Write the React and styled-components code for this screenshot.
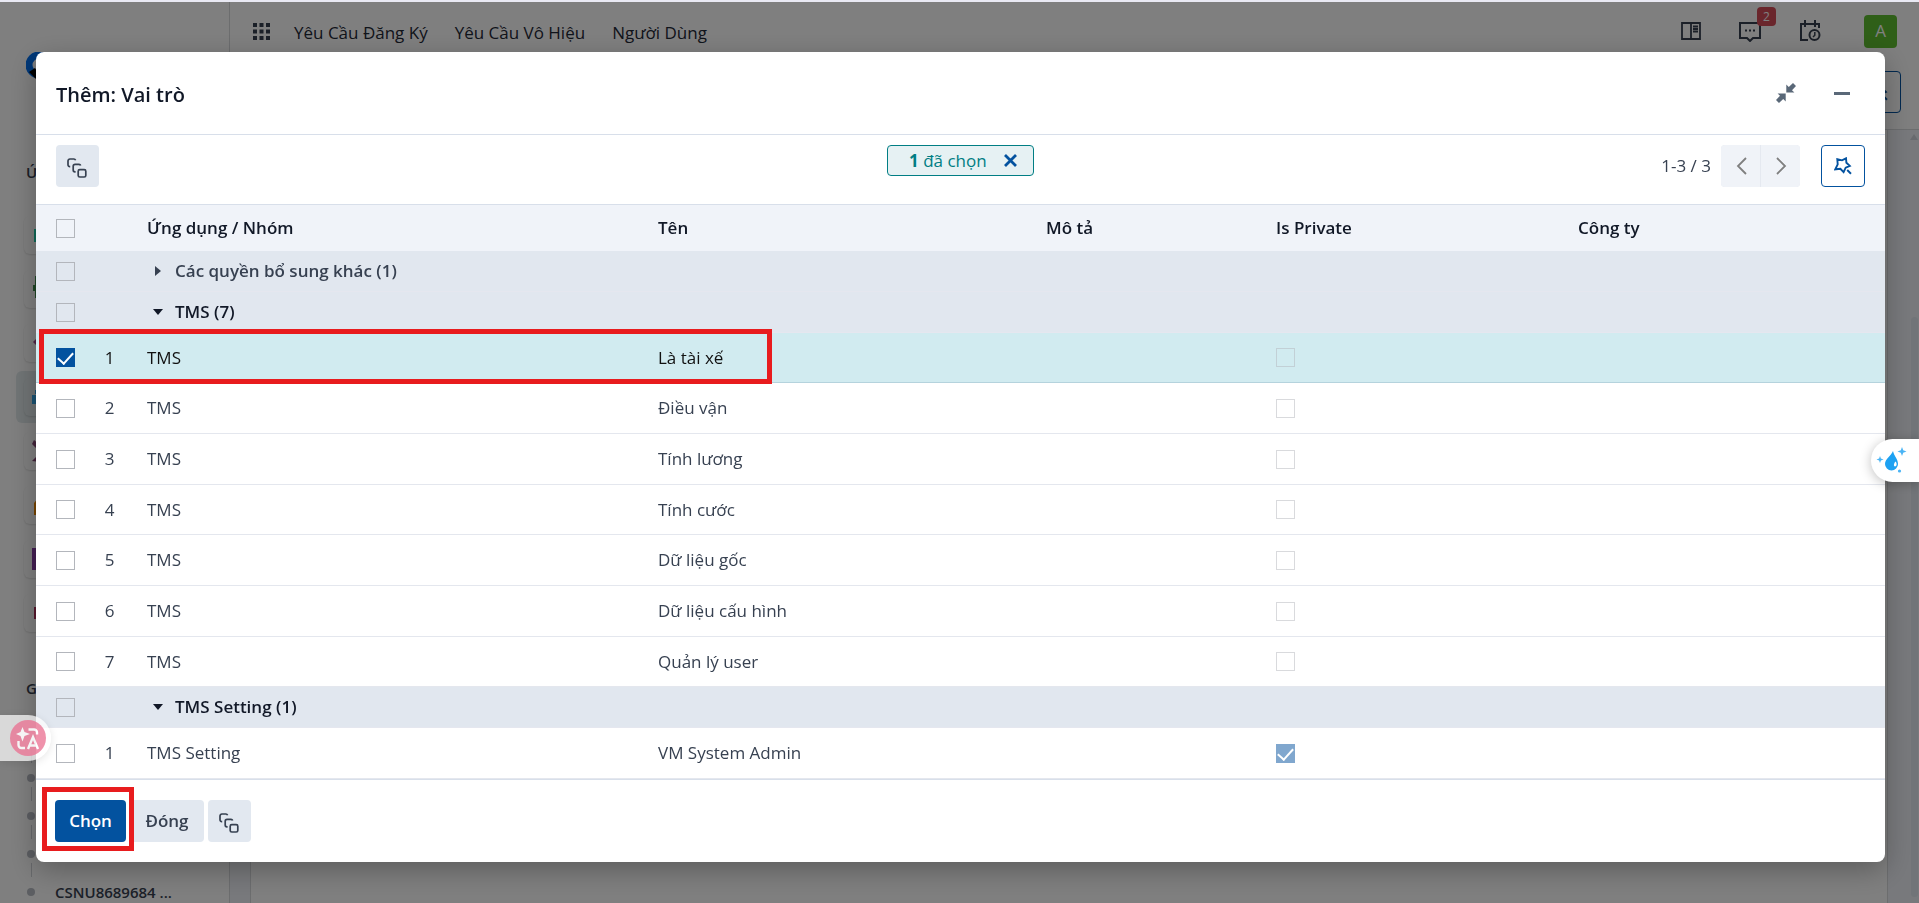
import React from "react";
import styled, { createGlobalStyle } from "styled-components";

const groups = [
  { name: "Các quyền bổ sung khác", count: 1, open: false, rows: [] },
  {
    name: "TMS",
    count: 7,
    open: true,
    rows: [
      { app: "TMS", name: "Là tài xế", selected: true },
      { app: "TMS", name: "Điều vận" },
      { app: "TMS", name: "Tính lương" },
      { app: "TMS", name: "Tính cước" },
      { app: "TMS", name: "Dữ liệu gốc" },
      { app: "TMS", name: "Dữ liệu cấu hình" },
      { app: "TMS", name: "Quản lý user" },
    ],
  },
  {
    name: "TMS Setting",
    count: 1,
    open: true,
    rows: [{ app: "TMS Setting", name: "VM System Admin", isPrivate: true }],
  },
];

const sideApps = [
  { id: "discuss", color: "#1fd3b0", d: "M2 8h24v13H2z" },
  { id: "calendar", color: "#3f8f4d", d: "M3 1h6v6h10V1h4v22H3v-7H1v-6h2z" },
  { id: "contacts", color: "#a0488c", d: "M1 13l7-7 8 7-8 7z" },
  { id: "employees", color: "#35a8e8", active: true, d: "M0 12h14v9H0zM3 7h4v4H3z" },
  { id: "tools", color: "#8a4a78", d: "M2 3l6 5-3 4-5-5zM0 24l8-8 5 3-5 6z" },
  { id: "stock", color: "#f28a00", d: "M2 24V12l6-7h14v19z" },
  { id: "sales", color: "#8a3ea8", d: "M0 3h24v22H0z" },
  { id: "apps", color: "#b0305a", d: "M2 8h18v12H2z" },
];

const StackIcon = () => (
  <svg width="20" height="20" viewBox="0 0 20 20" fill="none" stroke="#374151" strokeWidth="1.7">
    <path d="M3.2 8.6H2.9A1.9 1.9 0 0 1 1 6.7V2.9A1.9 1.9 0 0 1 2.9 1H6.9A1.9 1.9 0 0 1 8.6 2.2" />
    <path d="M8.6 13.9H8A1.9 1.9 0 0 1 6.2 12V8.2A1.9 1.9 0 0 1 8.100 6.300H12A1.9 1.9 0 0 1 13.700 7.500" />
    <rect x="11.2" y="11.600" width="7.600" height="7.400" rx="1.600" />
  </svg>
);

const StarIcon = () => (
  <svg width="18" height="18" viewBox="0 0 18 18" fill="none" stroke="#03529f" strokeWidth="1.900">
    <path d="M3.300 2.200L8 3.300L12 1.300L12.400 5.800L15.800 8.900L11.700 10.700L9.600 15.200L6.400 11.800L1.300 12.300L3.700 7.300Z" />
    <path d="M13.200 13l3.800 3.700" />
  </svg>
);

const App = () => {
  return (
    <Page>
      <GlobalStyle />
      <Shell>
        <Sidebar>
          <Logo>
            <svg width="48" height="48" viewBox="0 0 48 48">
              <circle cx="13" cy="13" r="10" fill="none" stroke="#0070f0" strokeWidth="7" />
              <path d="M3 20l6-4 8 12H11z" fill="#000" />
            </svg>
          </Logo>
          <SideTitle>Ứng dụng</SideTitle>
          <SideApps>
            {sideApps.map((app) => (
              <SideApp key={app.id} href="#" $active={app.active} aria-label={app.id}>
                <SideTile>
                  <svg width="28" height="28" viewBox="0 0 28 28">
                    <path d={app.d} fill={app.color} />
                  </svg>
                </SideTile>
              </SideApp>
            ))}
          </SideApps>
          <SideTitle>Gần đây</SideTitle>
          <Timeline>
            <TimelineItem />
            <TimelineItem />
            <TimelineItem />
            <TimelineItem>CSNU8689684 ...</TimelineItem>
          </Timeline>
        </Sidebar>
        <Main>
          <Topbar>
            <svg width="17" height="17" viewBox="0 0 17 17" fill="#374151">
              {[0, 6.5, 13].map((y) =>
                [0, 6.5, 13].map((x) => (
                  <rect key={`${x}-${y}`} x={x} y={y} width="4" height="4" />
                ))
              )}
            </svg>
            <TopMenu>
              <TopLink href="#">Yêu Cầu Đăng Ký</TopLink>
              <TopLink href="#">Yêu Cầu Vô Hiệu</TopLink>
              <TopLink href="#">Người Dùng</TopLink>
            </TopMenu>
            <Systray>
              <TrayButton aria-label="Tài liệu">
                <svg width="20" height="20" viewBox="0 0 20 20" fill="none" stroke="#374151" strokeWidth="2">
                  <path d="M1 2h18v16H1zM10 2v16M12 5.500h5M12 8h5M12 10.500h5" strokeWidth="1.800" />
                </svg>
              </TrayButton>
              <TrayButton aria-label="Tin nhắn">
                <svg width="22" height="22" viewBox="0 0 22 22" fill="none" stroke="#374151" strokeWidth="2">
                  <path d="M1 3h20v15h-7l-3 3-3-3H1z" />
                  <path d="M6 10.500h2M10 10.500h2M14 10.500h2" />
                </svg>
                <Badge>2</Badge>
              </TrayButton>
              <TrayButton aria-label="Hoạt động">
                <svg width="22" height="22" viewBox="0 0 22 22" fill="none" stroke="#374151" strokeWidth="2">
                  <path d="M9 20H2V4h18v4M6 0v7M16 0v7" />
                  <circle cx="15.500" cy="15" r="5" />
                  <path d="M15.800 12v3.300l-1.800 1.700" strokeWidth="1.500" />
                </svg>
              </TrayButton>
              <Avatar aria-label="Tài khoản">A</Avatar>
            </Systray>
          </Topbar>
          <ControlBar>
            <SearchToggle aria-label="Tìm kiếm">
              <StarIcon />
            </SearchToggle>
          </ControlBar>
          <Canvas>
            <Sheet />
            <ScrollTrack>
              <ScrollArrow />
              <ScrollThumb />
            </ScrollTrack>
          </Canvas>
        </Main>
      </Shell>

      <Backdrop>
        <Dialog role="dialog" aria-label="Thêm: Vai trò">
          <DialogHeader>
            <Title>Thêm: Vai trò</Title>
            <HeaderActions>
              <PlainButton aria-label="Thu nhỏ">
                <svg width="20" height="20" viewBox="0 0 20 20" fill="#5a6878">
                  <path d="M10.300 9.500V1.500L12.800 4L17 0L20 3L16 7.200L18.400 9.500Z" />
                  <path d="M9.700 10.500V18.500L7.200 16L3 20L0 17L4 12.800L1.600 10.500Z" />
                </svg>
              </PlainButton>
              <PlainButton aria-label="Ẩn">
                <svg width="16" height="20" viewBox="0 0 16 20" fill="#5a6878">
                  <rect y="9" width="16" height="3" />
                </svg>
              </PlainButton>
            </HeaderActions>
          </DialogHeader>

          <Toolbar>
            <IconButton aria-label="Mở rộng nhóm">
              <StackIcon />
            </IconButton>
            <Chip>
              <span>
                <b>1</b> đã chọn
              </span>
              <PlainButton aria-label="Bỏ chọn">
                <svg width="13" height="13" viewBox="0 0 13 13" stroke="#03529f" strokeWidth="2.800">
                  <path d="M1 1l11 11M12 1L1 12" />
                </svg>
              </PlainButton>
            </Chip>
            <PagerArea>
              <span>1-3 / 3</span>
              <Pager>
                <PagerButton aria-label="Trước">
                  <svg width="12" height="18" viewBox="0 0 12 18" fill="none" stroke="#7f7f7f" strokeWidth="1.800">
                    <path d="M11 1L3 9l8 8" />
                  </svg>
                </PagerButton>
                <PagerButton aria-label="Sau">
                  <svg width="12" height="18" viewBox="0 0 12 18" fill="none" stroke="#7f7f7f" strokeWidth="1.800">
                    <path d="M2 1l8 8-8 8" />
                  </svg>
                </PagerButton>
              </Pager>
              <SearchToggle aria-label="Bộ lọc">
                <StarIcon />
              </SearchToggle>
            </PagerArea>
          </Toolbar>

          <Table>
            <colgroup>
              <Col $w={50} />
              <Col $w={45} />
              <Col $w={511} />
              <Col $w={388} />
              <Col $w={230} />
              <Col $w={302} />
              <col />
            </colgroup>
            <thead>
              <HeadRow>
                <CheckCell>
                  <Checkbox aria-label="Chọn tất cả" />
                </CheckCell>
                <th />
                <HeadCell>Ứng dụng / Nhóm</HeadCell>
                <HeadCell>Tên</HeadCell>
                <HeadCell>Mô tả</HeadCell>
                <HeadCell>Is Private</HeadCell>
                <HeadCell>Công ty</HeadCell>
              </HeadRow>
            </thead>
            {groups.map((group) => (
              <tbody key={group.name}>
                <GroupRow>
                  <CheckCell>
                    <Checkbox aria-label={group.name} />
                  </CheckCell>
                  <td />
                  <Cell colSpan={5}>
                    <GroupToggle $open={group.open} aria-expanded={group.open}>
                      <Caret $open={group.open} />
                      {group.name} ({group.count})
                    </GroupToggle>
                  </Cell>
                </GroupRow>
                {group.rows.map((row, i) => (
                  <Row key={row.name} $selected={row.selected}>
                    <CheckCell>
                      <Checkbox defaultChecked={row.selected} aria-label={row.name} />
                    </CheckCell>
                    <NumberCell>{i + 1}</NumberCell>
                    <Cell>{row.app}</Cell>
                    <Cell>{row.name}</Cell>
                    <Cell />
                    <Cell>
                      <Checkbox disabled defaultChecked={row.isPrivate} aria-label="Is Private" />
                    </Cell>
                    <Cell />
                  </Row>
                ))}
              </tbody>
            ))}
          </Table>
          <RowMark />

          <DialogFooter>
            <Marked>
              <PrimaryButton>Chọn</PrimaryButton>
              <ButtonMark />
            </Marked>
            <SecondaryButton>Đóng</SecondaryButton>
            <IconButton aria-label="Mở rộng nhóm">
              <StackIcon />
            </IconButton>
          </DialogFooter>
        </Dialog>
      </Backdrop>

      <TranslateTab aria-label="Dịch">
        <svg width="36" height="36" viewBox="0 0 36 36" opacity=".75">
          <circle cx="18" cy="18" r="18" fill="#ea6e90" />
          <path d="M12.500 7l2 5 5.500 2-5.500 2-2 5.500-2-5.500L6 14l4.500-2z" fill="#fff" />
          <path d="M18.500 9.500H24a3 3 0 0 1 3 3v2M8.500 21v4a3 3 0 0 0 3 3H15" fill="none" stroke="#fff" strokeWidth="2.400" />
          <path d="M18 29l5-12 5 12M20 25.500h6" fill="none" stroke="#fff" strokeWidth="2.400" />
        </svg>
      </TranslateTab>
      <DropTab aria-label="Trợ lý">
        <svg width="32" height="28" viewBox="0 0 32 28" fill="#1da1f2">
          <path d="M17 4c1 5 5 8 5 13a6.500 6.500 0 0 1-13 0c0-5 6-8 8-13z" />
          <path d="M19.500 14.500c2 2 1 5-.5 5s-1.500-3 .5-5z" fill="#fff" />
          <path d="M26 0l1.200 3.300L30.500 4.500 27.200 5.700 26 9 24.800 5.700 21.500 4.500 24.800 3.300z" opacity=".8" />
          <path d="M4 9l.9 2.600L7.500 12.500 4.900 13.400 4 16 3.100 13.400.500 12.500 3.100 11.600z" opacity=".8" />
          <circle cx="23.500" cy="24" r="1.600" opacity=".8" />
        </svg>
      </DropTab>
    </Page>
  );
};

const GlobalStyle = createGlobalStyle`
  * {
    box-sizing: border-box;
  }
  body {
    margin: 0;
    overflow: hidden;
    font-family: "Open Sans", "Noto Sans", sans-serif;
    font-size: 17px;
    line-height: 24px;
    color: #374151;
  }
  button {
    font: inherit;
    color: inherit;
    border: 0;
    padding: 0;
    background: none;
    cursor: pointer;
  }
  svg {
    display: block;
  }
`;

const Page = styled.div`
  height: 100vh;
  border-top: 2px solid #e9e9f3;
  overflow: hidden;
`;

const Shell = styled.div`
  display: flex;
  height: 100%;
  background: #fff;
`;

const Sidebar = styled.aside`
  flex: none;
  width: 230px;
  border-right: 1px solid #d8dadd;
  padding: 50px 0 0 16px;
`;
const Logo = styled.div`
  height: 80px;
  margin-left: 10px;
`;
const SideTitle = styled.div`
  margin-left: 10px;
  height: 77px;
  padding-top: 28px;
  font-size: 15px;
  font-weight: 600;
`;
const SideApps = styled.nav`
  display: flex;
  flex-direction: column;
  gap: 2px;
  margin-bottom: 9px;
`;
const SideApp = styled.a`
  display: flex;
  align-items: center;
  height: 52px;
  padding-left: 8px;
  border-radius: 6px;
  background: ${(props) => (props.$active ? "#e2eaec" : "transparent")};
`;
const SideTile = styled.span`
  width: 40px;
  padding: 5px 4px 5px 8px;
  border-radius: 6px;
  box-shadow: 0 1px 2px rgba(0, 0, 0, 0.12);
`;
const Timeline = styled.ul`
  list-style: none;
  margin: 0;
  padding: 34px 0 0 11px;
`;
const TimelineItem = styled.li`
  position: relative;
  height: 38px;
  padding: 7px 0 0 28px;
  font-size: 15px;
  font-weight: 600;
  &::before {
    content: "";
    position: absolute;
    left: 0;
    top: 15px;
    width: 8px;
    height: 8px;
    border-radius: 50%;
    background: #b8bcc4;
  }
  &::after {
    content: "";
    position: absolute;
    left: 4px;
    top: -10px;
    width: 1px;
    height: 14px;
    background: #d0d3d8;
  }
`;

const Main = styled.div`
  flex: 1;
  display: flex;
  flex-direction: column;
`;
const Topbar = styled.header`
  display: flex;
  align-items: center;
  height: 58px;
  padding: 0 22px 0 23px;
`;
const TopMenu = styled.nav`
  display: flex;
  gap: 27px;
  margin-left: 24px;
  padding-top: 4px;
`;
const TopLink = styled.a`
  color: #1f2937;
  text-decoration: none;
`;
const Systray = styled.div`
  display: flex;
  align-items: center;
  gap: 38px;
  margin-left: auto;
`;
const TrayButton = styled.button`
  position: relative;
`;
const Badge = styled.span`
  position: absolute;
  left: 18px;
  top: -13px;
  width: 19px;
  height: 19px;
  border-radius: 4px;
  background: #d44c59;
  color: #fff;
  font-size: 12px;
  line-height: 19px;
`;
const Avatar = styled.button`
  width: 33px;
  height: 33px;
  margin-left: 5px;
  border-radius: 4px;
  background: #5fbe30;
  color: #fff;
`;
const ControlBar = styled.div`
  display: flex;
  justify-content: flex-end;
  height: 70px;
  padding: 11px 18px;
  border-bottom: 1px solid #d8dadd;
`;
const Canvas = styled.div`
  flex: 1;
  display: flex;
  background: #f1f3f8;
  padding-left: 20px;
`;
const Sheet = styled.div`
  flex: 1;
  background: #fff;
  border: solid #d8dadd;
  border-width: 0 1px;
`;
const ScrollTrack = styled.div`
  display: flex;
  flex-direction: column;
  justify-content: space-between;
  align-items: flex-end;
  width: 31px;
  padding: 4px 1px 6px 0;
`;
const ScrollArrow = styled.span`
  border: 4px solid transparent;
  border-top-width: 0;
  border-bottom: 6px solid #d0d5dd;
`;
const ScrollThumb = styled.span`
  width: 7px;
  height: 76%;
  border-radius: 4px;
  background: #e2e8f0;
`;

const Backdrop = styled.div`
  position: fixed;
  inset: 2px 0 0;
  padding: 50px 34px 0 36px;
  background: rgba(0, 0, 0, 0.5);
`;
const Dialog = styled.section`
  position: relative;
  border-radius: 8px;
  background: #fff;
  box-shadow: 0 8px 28px rgba(0, 0, 0, 0.28);
`;
const DialogHeader = styled.header`
  display: flex;
  align-items: center;
  justify-content: space-between;
  height: 83px;
  padding: 0 35px 0 20px;
  border-bottom: 1px solid #d8dfea;
`;
const Title = styled.h1`
  margin: 0;
  padding-top: 4px;
  font-size: 20px;
  line-height: 28px;
  font-weight: 600;
  color: #111827;
`;
const HeaderActions = styled.div`
  display: flex;
  gap: 38px;
`;
const PlainButton = styled.button`
  display: flex;
`;

const Toolbar = styled.div`
  display: grid;
  grid-template-columns: 1fr auto 1fr;
  align-items: start;
  height: 70px;
  padding: 10px 20px 0;
  border-bottom: 1px solid #d8dfea;
`;
const Button = styled.button`
  display: flex;
  align-items: center;
  justify-content: center;
  height: 42px;
  border-radius: 4px;
`;
const IconButton = styled(Button)`
  width: 43px;
  padding: 3px 1px 0 0;
  background: #e2e8f0;
`;
const PrimaryButton = styled(Button)`
  width: 71px;
  background: #03529f;
  color: #fff;
  font-weight: 600;
`;
const SecondaryButton = styled(Button)`
  width: 74px;
  background: #e2e8f0;
  font-weight: 600;
`;
const SearchToggle = styled(Button)`
  width: 44px;
  border: 1px solid #03529f;
`;
const Chip = styled.div`
  display: flex;
  align-items: center;
  justify-content: space-between;
  width: 147px;
  height: 31px;
  padding: 0 16px 0 21px;
  border: 1px solid #017e84;
  border-radius: 4px;
  background: #e6f1f3;
  color: #017e84;
  b {
    font-weight: 700;
  }
`;
const PagerArea = styled.div`
  display: flex;
  align-items: center;
  justify-content: flex-end;
`;
const Pager = styled.div`
  display: flex;
  gap: 1px;
  margin: 0 21px 0 10px;
  border-radius: 4px;
  background: #e5e9f0;
  overflow: hidden;
`;
const PagerButton = styled(Button)`
  width: 39px;
  border-radius: 0;
  background: #f0f3f8;
`;

const Table = styled.table`
  width: 100%;
  table-layout: fixed;
  border-collapse: separate;
  border-spacing: 0;
  td,
  th {
    padding: 0;
    text-align: left;
    vertical-align: middle;
  }
`;
const Col = styled.col`
  width: ${(props) => props.$w}px;
`;
const HeadRow = styled.tr`
  height: 46px;
  background: #f0f3f9;
`;
const Cell = styled.td`
  && {
    padding-left: 16px;
  }
`;
const HeadCell = styled.th`
  && {
    padding-left: 16px;
  }
  color: #111827;
  font-weight: 600;
`;
const CheckCell = styled.td`
  && {
    padding-left: 20px;
  }
`;
const NumberCell = styled.td`
  && {
    padding-left: 2px;
    text-align: center;
  }
`;
const GroupRow = styled.tr`
  height: 41px;
  background: #e1e7ef;
  td {
    border-bottom: 1px solid #e5e7ef;
  }
`;
const Row = styled.tr`
  height: ${(props) => (props.$selected ? 50 : 51)}px;
  background: ${(props) => (props.$selected ? "#d1ebf0" : "#fff")};
  color: ${(props) => (props.$selected ? "#111" : "#374151")};
  &:nth-child(3n + 5) {
    height: 50px;
  }
  td {
    border-bottom: 1px solid ${(props) => (props.$selected ? "#b5d3dd" : "#e4e7ee")};
  }
`;
const Checkbox = styled.input.attrs({ type: "checkbox" })`
  appearance: none;
  display: block;
  width: 19px;
  height: 19px;
  margin: 0;
  border: 1px solid #b3b6bc;
  opacity: ${(props) => (props.disabled ? 0.5 : 1)};
  &:checked {
    border-color: #03529f;
    background: #03529f;
  }
  &:checked::after {
    content: "";
    display: block;
    width: 7px;
    height: 13px;
    margin: 0 auto;
    border: solid #fff;
    border-width: 0 2px 2px 0;
    transform: rotate(42deg);
  }
`;
const GroupToggle = styled.button`
  display: flex;
  align-items: center;
  padding-left: 6px;
  font-weight: 600;
  color: ${(props) => (props.$open ? "#111827" : "#374151")};
`;
const Caret = styled.span`
  flex: none;
  width: 10px;
  height: 10px;
  margin-right: 12px;
  background: currentColor;
  clip-path: ${(props) =>
    props.$open ? "polygon(0 20%, 100% 20%, 50% 80%)" : "polygon(20% 0, 80% 50%, 20% 100%)"};
`;
const RowMark = styled.div`
  position: absolute;
  left: 3px;
  top: 277px;
  width: 733px;
  height: 55px;
  border: 5px solid #e81c1e;
  pointer-events: none;
`;

const DialogFooter = styled.footer`
  display: flex;
  gap: 4px;
  height: 83px;
  padding: 20px 19px;
  border-top: 1px solid #d8dfea;
`;
const Marked = styled.div`
  position: relative;
`;
const ButtonMark = styled.div`
  position: absolute;
  inset: -13px -8px -9px -13px;
  border: 5px solid #e81c1e;
  pointer-events: none;
`;

const FloatingTab = styled.button`
  position: fixed;
  display: flex;
  align-items: center;
`;
const TranslateTab = styled(FloatingTab)`
  left: 0;
  bottom: 142px;
  width: 51px;
  height: 46px;
  padding-left: 10px;
  border-radius: 0 23px 23px 0;
  background: rgba(255, 255, 255, 0.7);
  box-shadow: 0 2px 8px rgba(0, 0, 0, 0.1);
`;
const DropTab = styled(FloatingTab)`
  right: 0;
  top: 439px;
  width: 48px;
  height: 43px;
  padding-left: 5px;
  border-radius: 22px 0 0 22px;
  background: #fff;
  box-shadow: 0 2px 12px rgba(0, 0, 0, 0.25);
`;

export default App;
